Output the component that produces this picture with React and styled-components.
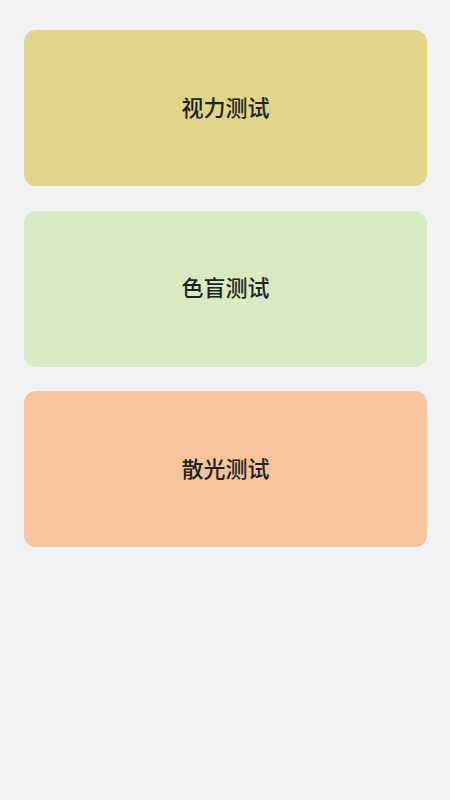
import React from 'react';
import styled, { createGlobalStyle } from 'styled-components';

const GlobalStyle = createGlobalStyle`
  html, body {
    margin: 0;
    padding: 0;
    background: #f1f2f4;
  }
  body {
    font-family: "Noto Sans CJK SC", "Noto Sans", sans-serif;
  }
`;

const Page = styled.div`
  min-height: 800px;
  box-sizing: border-box;
  padding: 30px 23px 30px 24px;
  display: flex;
  flex-direction: column;
  gap: 24.5px;
  background: #f1f2f4;
`;

const TestCard = styled.button`
  height: 156px;
  border: none;
  border-radius: 12px;
  background-color: ${props => props.color};
  display: flex;
  align-items: center;
  justify-content: center;
  font-family: "Noto Sans CJK SC", sans-serif;
  font-size: 22px;
  line-height: 1;
  font-weight: 500;
  color: #222222;
  cursor: pointer;
  padding: 0 0 5px;
`;

const tests = [
  { name: '视力测试', color: '#e0d489' },
  { name: '色盲测试', color: '#d8eac2' },
  { name: '散光测试', color: '#f5c49a' },
];

const App = () => (
  <>
    <GlobalStyle />
    <Page>
      {tests.map(test => (
        <TestCard key={test.name} color={test.color}>
          {test.name}
        </TestCard>
      ))}
    </Page>
  </>
);

export default App;
